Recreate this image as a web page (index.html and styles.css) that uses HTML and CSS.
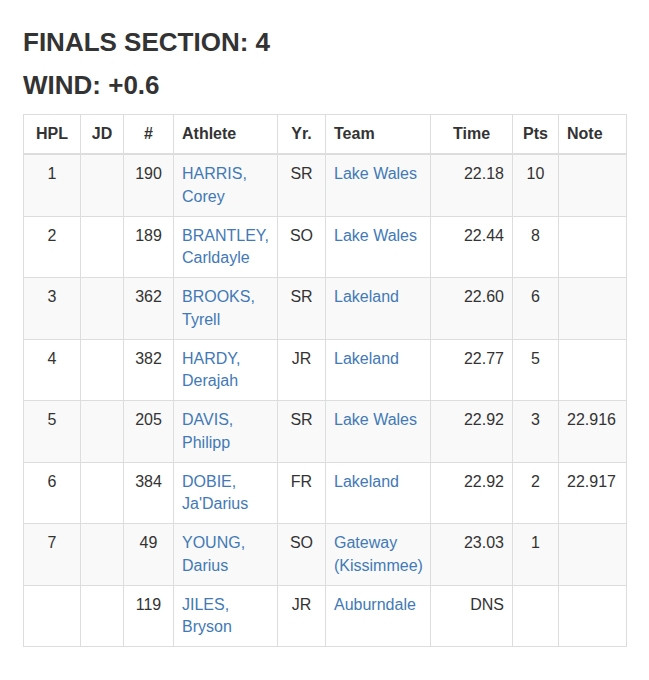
FILE: index.html
```html
<!DOCTYPE html>
<html>
<head>
<meta charset="utf-8">
<title>Finals Section 4</title>
<link rel="stylesheet" href="styles.css">
</head>
<body>
<div class="container">
  <h3 class="heading">FINALS SECTION: 4</h3>
  <h3 class="heading heading-sub">WIND: +0.6</h3>
  <table class="results">
    <colgroup>
      <col class="c-hpl"><col class="c-jd"><col class="c-num"><col class="c-ath"><col class="c-yr"><col class="c-team"><col class="c-time"><col class="c-pts"><col class="c-note">
    </colgroup>
    <thead>
      <tr>
        <th class="center">HPL</th>
        <th class="center">JD</th>
        <th class="center">#</th>
        <th>Athlete</th>
        <th class="center">Yr.</th>
        <th>Team</th>
        <th class="center">Time</th>
        <th class="center">Pts</th>
        <th>Note</th>
      </tr>
    </thead>
    <tbody>
      <tr>
        <td class="center">1</td><td></td><td class="center">190</td>
        <td><a href="#">HARRIS, Corey</a></td><td class="center">SR</td>
        <td><a href="#">Lake Wales</a></td><td class="right">22.18</td><td class="center">10</td><td></td>
      </tr>
      <tr>
        <td class="center">2</td><td></td><td class="center">189</td>
        <td><a href="#">BRANTLEY, Carldayle</a></td><td class="center">SO</td>
        <td><a href="#">Lake Wales</a></td><td class="right">22.44</td><td class="center">8</td><td></td>
      </tr>
      <tr>
        <td class="center">3</td><td></td><td class="center">362</td>
        <td><a href="#">BROOKS, Tyrell</a></td><td class="center">SR</td>
        <td><a href="#">Lakeland</a></td><td class="right">22.60</td><td class="center">6</td><td></td>
      </tr>
      <tr>
        <td class="center">4</td><td></td><td class="center">382</td>
        <td><a href="#">HARDY, Derajah</a></td><td class="center">JR</td>
        <td><a href="#">Lakeland</a></td><td class="right">22.77</td><td class="center">5</td><td></td>
      </tr>
      <tr>
        <td class="center">5</td><td></td><td class="center">205</td>
        <td><a href="#">DAVIS, Philipp</a></td><td class="center">SR</td>
        <td><a href="#">Lake Wales</a></td><td class="right">22.92</td><td class="center">3</td><td>22.916</td>
      </tr>
      <tr>
        <td class="center">6</td><td></td><td class="center">384</td>
        <td><a href="#">DOBIE, Ja'Darius</a></td><td class="center">FR</td>
        <td><a href="#">Lakeland</a></td><td class="right">22.92</td><td class="center">2</td><td>22.917</td>
      </tr>
      <tr>
        <td class="center">7</td><td></td><td class="center">49</td>
        <td><a href="#">YOUNG, Darius</a></td><td class="center">SO</td>
        <td><a href="#">Gateway (Kissimmee)</a></td><td class="right">23.03</td><td class="center">1</td><td></td>
      </tr>
      <tr>
        <td class="center"></td><td></td><td class="center">119</td>
        <td><a href="#">JILES, Bryson</a></td><td class="center">JR</td>
        <td><a href="#">Auburndale</a></td><td class="right">DNS</td><td class="center"></td><td></td>
      </tr>
    </tbody>
  </table>
</div>
</body>
</html>
```

FILE: styles.css
```css
html, body {
  background: #fff;
}
body {
  margin: 8px;
  font-family: "Liberation Sans", Arial, sans-serif;
  font-size: 16px;
  line-height: 22.25px;
  color: #333;
}
.container {
  padding: 0 15px;
}
.heading {
  font-size: 26px;
  font-weight: 700;
  line-height: 28px;
  margin: 20px 0 0;
  color: #333;
}
.heading-sub {
  margin-top: 15px;
}
.results {
  margin-top: 15px;
  width: 603px;
  table-layout: fixed;
  border-collapse: collapse;
  border: 1px solid #ddd;
}
.c-hpl { width: 57px; }
.c-jd { width: 43px; }
.c-num { width: 50px; }
.c-ath { width: 104px; }
.c-yr { width: 48px; }
.c-team { width: 105px; }
.c-time { width: 82px; }
.c-pts { width: 46px; }
.c-note { width: 68px; }
.results th,
.results td {
  padding: 8px;
  border: 1px solid #ddd;
  text-align: left;
}
.results th {
  vertical-align: bottom;
  font-weight: 700;
  border-bottom: 2px solid #ddd;
}
.results td {
  vertical-align: top;
}
.results tbody tr:nth-child(odd) {
  background: #f9f9f9;
}
.results .center { text-align: center; }
.results .right { text-align: right; }
.results a {
  color: #4279b6;
  text-decoration: none;
}
```
